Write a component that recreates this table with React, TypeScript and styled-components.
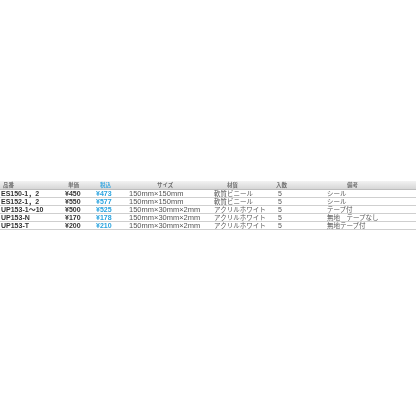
import React from "react";
import styled, { createGlobalStyle } from "styled-components";

const Global = createGlobalStyle`
  html, body { margin: 0; padding: 0; background: #fff; }
  body {
    font-family: "Liberation Sans", "Noto Sans CJK JP", sans-serif;
    -webkit-font-smoothing: antialiased;
  }
`;

const Page = styled.div`
  width: 416px;
  height: 416px;
  padding-top: 181px;
  box-sizing: border-box;
`;

const Table = styled.div`
  will-change: transform;
  background: #fff;
`;

const cols = "64px 32px 33px 84px 58px 56px 1fr";

const HeaderRow = styled.div`
  display: grid;
  grid-template-columns: ${cols};
  height: 9px;
  align-items: center;
  background: linear-gradient(to bottom, #f2f2f2, #d6d6d6);
  border-bottom: 1px solid #bdbdbd;
  box-sizing: border-box;
`;

const HeadCell = styled.div<{ $pl?: number; $blue?: boolean }>`
  font-family: "Noto Sans CJK JP", sans-serif;
  font-size: 5.5px;
  line-height: 9px;
  font-weight: 700;
  color: ${(p) => (p.$blue ? "#3aa8e0" : "#707070")};
  padding-left: ${(p) => p.$pl ?? 0}px;
  white-space: nowrap;
`;

const Row = styled.div`
  display: grid;
  grid-template-columns: ${cols};
  height: 8px;
  align-items: center;
  border-bottom: 1px solid #cfcfcf;
  box-sizing: border-box;
`;

const Cell = styled.div<{ $bold?: boolean; $color?: string; $pl?: number; $size?: number }>`
  font-family: "Liberation Sans", "Noto Sans CJK JP", sans-serif;
  font-size: ${(p) => p.$size ?? 7}px;
  line-height: 7px;
  font-weight: ${(p) => (p.$bold ? 700 : 400)};
  color: ${(p) => p.$color ?? "#555"};
  padding-left: ${(p) => p.$pl ?? 0}px;
  white-space: pre;
`;

const data = [
  ["ES150-1，2", "¥450", "¥473", "150mm×150mm", "軟質ビニール", "5", "シール"],
  ["ES152-1，2", "¥550", "¥577", "150mm×150mm", "軟質ビニール", "5", "シール"],
  ["UP153-1～10", "¥500", "¥525", "150mm×30mm×2mm", "アクリルホワイト", "5", "テープ付"],
  ["UP153-N", "¥170", "¥178", "150mm×30mm×2mm", "アクリルホワイト", "5", "無地　テープなし"],
  ["UP153-T", "¥200", "¥210", "150mm×30mm×2mm", "アクリルホワイト", "5", "無地テープ付"],
];

export default function App() {
  return (
    <>
      <Global />
      <Page>
        <Table>
          <HeaderRow>
            <HeadCell $pl={3}>品番</HeadCell>
            <HeadCell $pl={4}>単価</HeadCell>
            <HeadCell $pl={4} $blue>税込</HeadCell>
            <HeadCell $pl={28}>サイズ</HeadCell>
            <HeadCell $pl={14}>材質</HeadCell>
            <HeadCell $pl={5}>入数</HeadCell>
            <HeadCell $pl={20}>備考</HeadCell>
          </HeaderRow>
          {data.map((r) => (
            <Row key={r[0]}>
              <Cell $bold $color="#333" $pl={1}>{r[0]}</Cell>
              <Cell $bold $color="#333" $pl={1}>{r[1]}</Cell>
              <Cell $bold $color="#29a3df">{r[2]}</Cell>
              <Cell $color="#555" $size={7.5}>{r[3]}</Cell>
              <Cell $color="#555" $pl={1} $size={6.5}>{r[4]}</Cell>
              <Cell $color="#555" $pl={7}>{r[5]}</Cell>
              <Cell $color="#555" $size={6.5}>{r[6]}</Cell>
            </Row>
          ))}
        </Table>
      </Page>
    </>
  );
}
